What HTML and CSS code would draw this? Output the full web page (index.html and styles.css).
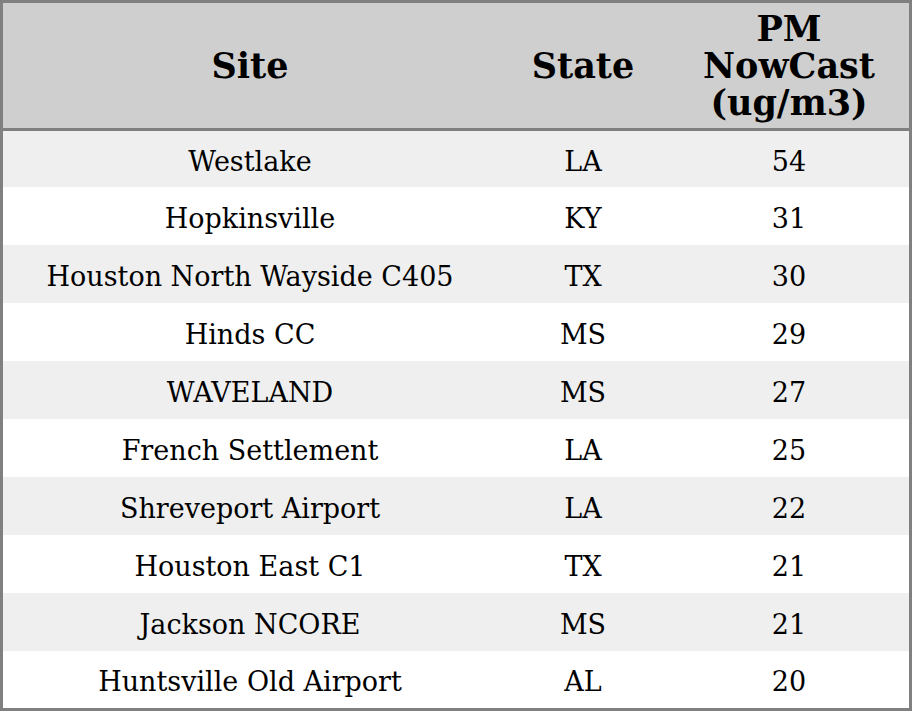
FILE: index.html
```html
<!DOCTYPE html>
<html>
<head>
<meta charset="utf-8">
<link rel="stylesheet" href="styles.css">
</head>
<body>
<table class="data">
  <colgroup>
    <col class="c-site">
    <col class="c-state">
    <col class="c-pm">
  </colgroup>
  <thead>
    <tr><th>Site</th><th>State</th><th>PM<br>NowCast<br>(ug/m3)</th></tr>
  </thead>
  <tbody>
    <tr><td>Westlake</td><td>LA</td><td>54</td></tr>
    <tr><td>Hopkinsville</td><td>KY</td><td>31</td></tr>
    <tr><td>Houston North Wayside C405</td><td>TX</td><td>30</td></tr>
    <tr><td>Hinds CC</td><td>MS</td><td>29</td></tr>
    <tr><td>WAVELAND</td><td>MS</td><td>27</td></tr>
    <tr><td>French Settlement</td><td>LA</td><td>25</td></tr>
    <tr><td>Shreveport Airport</td><td>LA</td><td>22</td></tr>
    <tr><td>Houston East C1</td><td>TX</td><td>21</td></tr>
    <tr><td>Jackson NCORE</td><td>MS</td><td>21</td></tr>
    <tr><td>Huntsville Old Airport</td><td>AL</td><td>20</td></tr>
  </tbody>
</table>
</body>
</html>
```
FILE: styles.css
```css
html, body {
  margin: 0;
  padding: 0;
  background: #ffffff;
}
.data {
  width: 912px;
  table-layout: fixed;
  border-collapse: separate;
  border-spacing: 0;
  border: 3px solid #808080;
  font-family: "DejaVu Serif", serif;
  color: #000;
}
.c-site { width: 494px; }
.c-state { width: 172px; }
.c-pm { width: 240px; }
.data th {
  background: #cfcfcf;
  height: 125px;
  padding: 0;
  font-size: 35px;
  font-weight: bold;
  line-height: 37px;
  text-align: center;
  vertical-align: middle;
  border-bottom: 3px solid #808080;
}
.data td {
  box-sizing: border-box;
  height: 58px;
  padding: 4px 0 0 0;
  font-size: 27px;
  text-align: center;
  vertical-align: middle;
}
.data tbody tr:first-child td { height: 56px; }
.data tbody tr:last-child td { height: 57px; }
.data tbody tr:nth-child(odd) td { background: #efefef; }
```
